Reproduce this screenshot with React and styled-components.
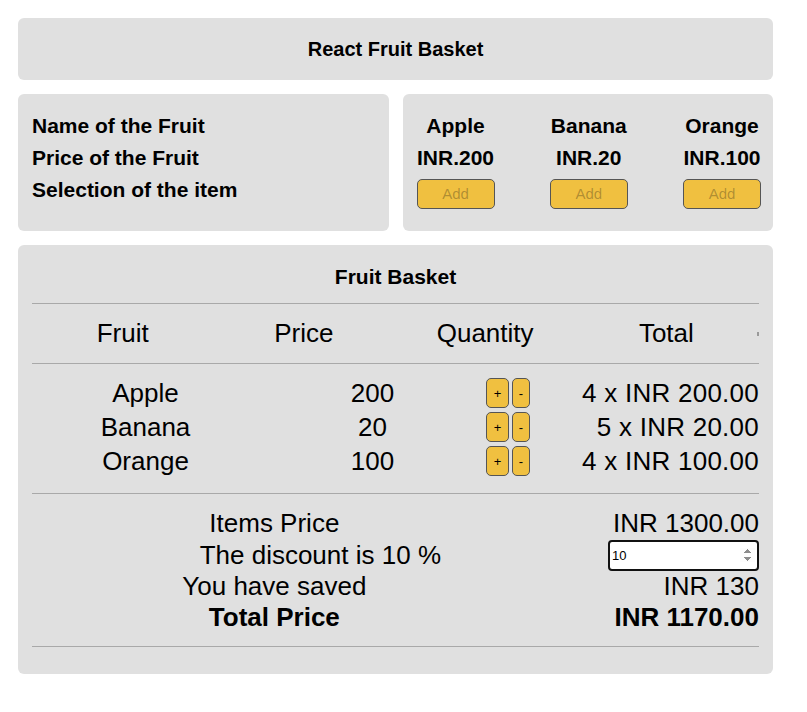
import React, { useState } from "react";
import styled, { createGlobalStyle } from "styled-components";

const GlobalStyle = createGlobalStyle`
  body {
    margin: 0;
    background: #fff;
    color: #000;
    font-family: "Liberation Sans", Arial, sans-serif;
  }
`;

const Page = styled.div`
  width: 755px;
  padding: 18px;
  display: flex;
  flex-direction: column;
  gap: 14px;
`;

const Box = styled.div`
  background: #e0e0e0;
  border-radius: 6px;
`;

const Header = styled(Box)`
  height: 62px;
  display: flex;
  align-items: center;
  justify-content: center;
  font-size: 20px;
  font-weight: bold;
`;

const Panels = styled.div`
  display: grid;
  grid-template-columns: 1fr 1fr;
  gap: 14px;
`;

const LeftPanel = styled(Box)`
  padding: 16px 14px;
  font-size: 21px;
  font-weight: bold;
  line-height: 32px;
`;

const RightPanel = styled(Box)`
  padding: 16px 12px 22px 14px;
  display: flex;
  justify-content: space-between;
`;

const FruitCol = styled.div`
  display: flex;
  flex-direction: column;
  align-items: center;
  font-size: 21px;
  font-weight: bold;
  line-height: 32px;
`;

const AddButton = styled.button`
  margin-top: 5px;
  width: 78px;
  height: 30px;
  padding: 0;
  background: #f0c040;
  border: 1px solid #555;
  border-radius: 5px;
  color: rgba(16, 16, 16, 0.3);
  font-family: inherit;
  font-size: 15px;
  line-height: 28px;
`;

const Basket = styled(Box)`
  padding: 20px 14px 27px;
`;

const Title = styled.div`
  text-align: center;
  font-size: 21px;
  font-weight: bold;
  line-height: 24px;
  margin-bottom: 14px;
`;

const Rule = styled.div`
  height: 1px;
  background: #a9a9a9;
`;

const HeadRow = styled.div`
  display: grid;
  grid-template-columns: repeat(4, 1fr) 2px;
  height: 59px;
  align-items: center;
  font-size: 26px;
  text-align: center;
`;

const Tick = styled.span`
  display: block;
  width: 2px;
  height: 4px;
  background: #9a9a9a;
`;

const Body = styled.div`
  padding: 12px 0 15px;
`;

const Row = styled.div`
  display: grid;
  grid-template-columns: 227px 227px 1fr auto;
  height: 34px;
  align-items: center;
  font-size: 26px;
  white-space: nowrap;
`;

const Cell = styled.div`
  text-align: ${(p) => p.$align || "center"};
  letter-spacing: ${(p) => (p.$align === "right" ? "0.25px" : "0")};
`;

const QtyGroup = styled.div`
  display: flex;
  gap: 3px;
`;

const QtyButton = styled.button`
  width: ${(p) => (p.$wide ? 23 : 18)}px;
  height: 30px;
  padding: 0;
  background: #f0c040;
  border: 1px solid #555;
  border-radius: 5px;
  color: #000;
  font-family: inherit;
  font-size: 13px;
`;

const Footer = styled.div`
  padding: 14px 0 13px;
`;

const FooterRow = styled.div`
  display: grid;
  grid-template-columns: 2fr 1fr;
  align-items: center;
  height: ${(p) => p.$h}px;
  font-size: 26px;
  font-weight: ${(p) => (p.$bold ? "bold" : "normal")};
  white-space: nowrap;
`;

const Label = styled.div`
  text-align: center;
  padding-left: ${(p) => p.$shift || 0}px;
`;

const Value = styled.div`
  text-align: right;
`;

const DiscountInput = styled.input`
  justify-self: end;
  box-sizing: border-box;
  width: 151px;
  height: 31px;
  padding: 1px 2px;
  border: 2px solid #111;
  border-radius: 4px;
  background: #fff;
  outline: none;
  font-family: "Liberation Sans", Arial, sans-serif;
  font-size: 13px;
`;

const fruits = [
  { name: "Apple", price: 200 },
  { name: "Banana", price: 20 },
  { name: "Orange", price: 100 },
];

export default function App() {
  const [qty, setQty] = useState({ Apple: 4, Banana: 5, Orange: 4 });
  const [discount, setDiscount] = useState(10);

  const change = (name, d) =>
    setQty((q) => ({ ...q, [name]: Math.max(0, q[name] + d) }));

  const itemsPrice = fruits.reduce((s, f) => s + f.price * qty[f.name], 0);
  const saved = (itemsPrice * discount) / 100;

  return (
    <>
      <GlobalStyle />
      <Page>
        <Header>React Fruit Basket</Header>
        <Panels>
          <LeftPanel>
            <div>Name of the Fruit</div>
            <div>Price of the Fruit</div>
            <div>Selection of the item</div>
          </LeftPanel>
          <RightPanel>
            {fruits.map((f) => (
              <FruitCol key={f.name}>
                <div>{f.name}</div>
                <div>INR.{f.price}</div>
                <AddButton disabled>Add</AddButton>
              </FruitCol>
            ))}
          </RightPanel>
        </Panels>
        <Basket>
          <Title>Fruit Basket</Title>
          <Rule />
          <HeadRow>
            <div>Fruit</div>
            <div>Price</div>
            <div>Quantity</div>
            <div>Total</div>
            <Tick />
          </HeadRow>
          <Rule />
          <Body>
            {fruits.map((f) => (
              <Row key={f.name}>
                <Cell>{f.name}</Cell>
                <Cell>{f.price}</Cell>
                <QtyGroup>
                  <QtyButton $wide onClick={() => change(f.name, 1)}>+</QtyButton>
                  <QtyButton onClick={() => change(f.name, -1)}>-</QtyButton>
                </QtyGroup>
                <Cell $align="right">
                  {qty[f.name]} x INR {f.price.toFixed(2)}
                </Cell>
              </Row>
            ))}
          </Body>
          <Rule />
          <Footer>
            <FooterRow $h={31}>
              <Label>Items Price</Label>
              <Value>INR {itemsPrice.toFixed(2)}</Value>
            </FooterRow>
            <FooterRow $h={32}>
              <Label $shift={92}>The discount is {discount} %</Label>
              <DiscountInput
                type="number"
                autoFocus
                value={discount}
                onChange={(e) => setDiscount(Number(e.target.value) || 0)}
              />
            </FooterRow>
            <FooterRow $h={31}>
              <Label>You have saved</Label>
              <Value>INR {saved}</Value>
            </FooterRow>
            <FooterRow $h={31} $bold>
              <Label>Total Price</Label>
              <Value>INR {(itemsPrice - saved).toFixed(2)}</Value>
            </FooterRow>
          </Footer>
          <Rule />
        </Basket>
      </Page>
    </>
  );
}
